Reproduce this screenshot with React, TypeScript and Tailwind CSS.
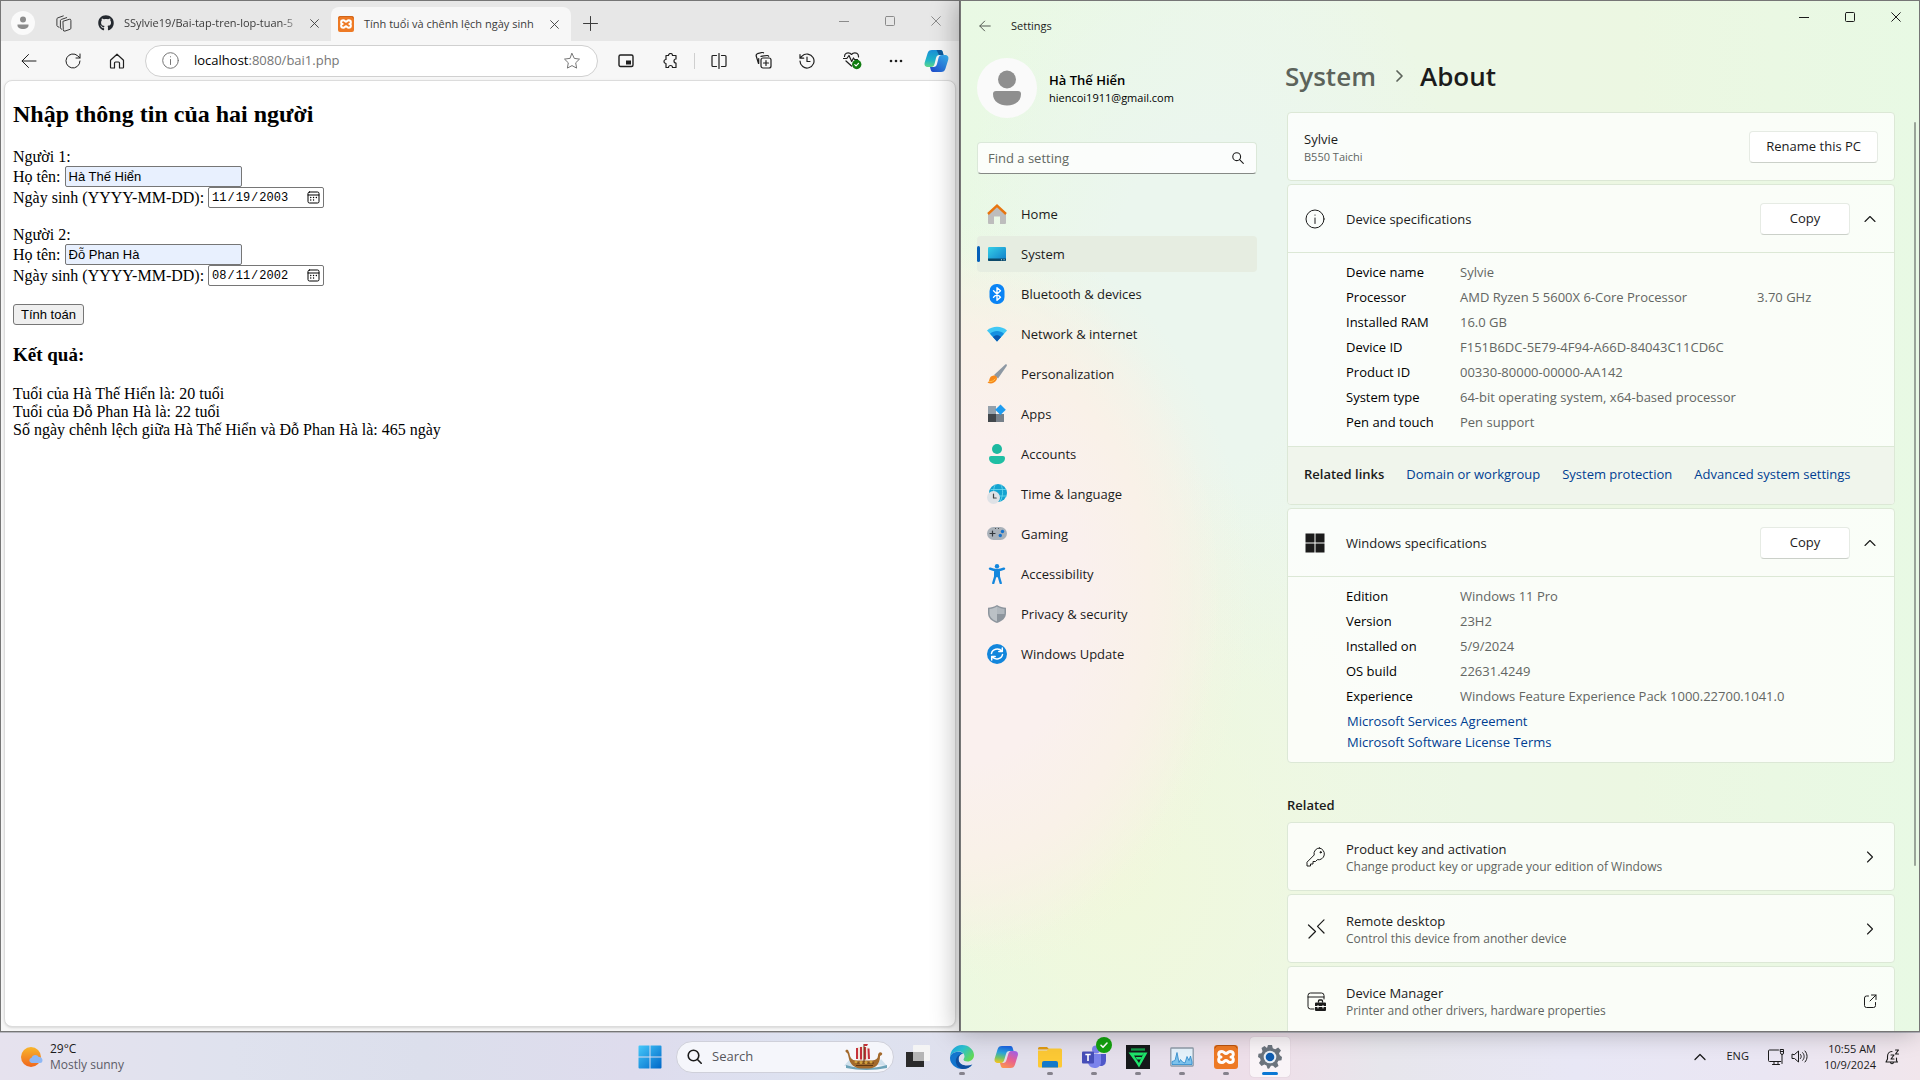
import type { ReactNode } from "react";
import { FaGithub } from "react-icons/fa";

const UI = "font-['Open_Sans','Noto_Sans',sans-serif]";

type IconProps = { size?: number; box?: number; sw?: number; className?: string; children: ReactNode };

function Icon({ size = 20, box = 20, sw = 1, className = "", children }: IconProps) {
  return (
    <svg
      width={size}
      height={size}
      viewBox={`0 0 ${box} ${box}`}
      fill="none"
      stroke="currentColor"
      strokeWidth={sw}
      strokeLinecap="round"
      strokeLinejoin="round"
      className={`shrink-0 ${className}`}
      aria-hidden="true"
    >
      {children}
    </svg>
  );
}

const BackArrow = ({ size = 16 }: { size?: number }) => (
  <Icon size={size} box={16} sw={size < 16 ? 1.3 : 1}><path d="M15 8H1.2M7.500 1.500 1 8l6.500 6.500" /></Icon>
);
const CloseX = ({ size = 10 }: { size?: number }) => (
  <Icon size={size} box={10}><path d="m.7.700 8.600 8.600M9.300.7.7 9.300" /></Icon>
);
const XamppLogo = ({ size }: { size: number }) => (
  <Icon size={size} box={24}>
    <rect x="0" y="0" width="24" height="24" rx="3" fill="#ee7a25" stroke="none" />
    <path d="M1 3a3 3 0 0 1 3-2.500h16A3 3 0 0 1 23 3" stroke="#b8530f" />
    <path
      d="M8 6.500c-2.500 0-3.300 1.200-3.300 2.800S6 12 7 12c-1 0-2.300 1.100-2.300 2.700S5.500 17.500 8 17.500c2.200 0 2.300-2 4-2s1.800 2 4 2c2.500 0 3.300-1.200 3.300-2.800S18 12 17 12c1 0 2.300-1.100 2.300-2.700S18.500 6.500 16 6.500c-2.200 0-2.300 2-4 2s-1.800-2-4-2Z"
      stroke="#fff"
      strokeWidth="3"
    />
  </Icon>
);

function BrowserTabs() {
  return (
    <header className="flex h-10 items-end bg-[#e7e7e7] text-[#3b3b3b]">
      <div className="flex h-9 items-center">
        <button aria-label="Profile" className="ml-2.5 flex size-6 items-center justify-center rounded-full bg-[#fafafa] text-[#8c8c8c]">
          <Icon size={14} box={14}>
            <circle cx="7" cy="3.500" r="3" fill="currentColor" stroke="none" />
            <path d="M1.500 8.500h11v.8c0 2.500-2.500 3.700-5.500 3.700s-5.500-1.200-5.500-3.700Z" fill="currentColor" stroke="none" />
          </Icon>
        </button>
        <button aria-label="Workspaces" className="ml-5">
          <Icon size={17} box={17}>
            <path d="m8.300 6.200 6-1.900a1.200 1.200 0 0 1 1.600 1.100v7.800a1.200 1.200 0 0 1-.8 1.100l-5.200 1.800a1.200 1.200 0 0 1-1.600-1.100Z" />
            <path d="M6.800 14.200 6 13.800a1 1 0 0 1-.6-1V5.600a1.200 1.200 0 0 1 .8-1.100l5.500-1.900M4 12.200l-1.500-.7a1 1 0 0 1-.6-1V4a1.200 1.200 0 0 1 .8-1.100L8.300.9" />
          </Icon>
        </button>
      </div>
      <div className="ml-[26px] flex h-9 w-[233px] items-center">
        <FaGithub size={16} className="shrink-0 text-[#24292f]" />
        <span className="ml-2.5 w-[182px] text-[11px] whitespace-nowrap [mask-image:linear-gradient(to_right,black_86%,transparent)]">
          SSylvie19/Bai-tap-tren-lop-tuan-5
        </span>
        <button aria-label="Close tab" className="ml-1"><CloseX size={9} /></button>
      </div>
      <div className="flex h-[34px] w-60 items-center rounded-t-lg bg-[#f7f7f7] pr-3 pl-[7px]">
        <XamppLogo size={16} />
        <span className="ml-2.5 flex-1 text-[11px] whitespace-nowrap">Tính tuổi và chênh lệch ngày sinh</span>
        <button aria-label="Close tab"><CloseX size={9} /></button>
      </div>
      <button aria-label="New tab" className="mb-2.5 ml-3">
        <Icon size={15} box={15}><path d="M7.500.5v14M.5 7.500h14" /></Icon>
      </button>
      <div className="ml-auto flex h-full items-center gap-9 pr-[18px] text-[#8b8b8b]">
        <button aria-label="Minimize"><Icon size={10} box={10}><path d="M0 5.500h10" /></Icon></button>
        <button aria-label="Maximize"><Icon size={10} box={10}><rect x=".5" y=".5" width="9" height="9" rx="1" /></Icon></button>
        <button aria-label="Close"><CloseX /></button>
      </div>
    </header>
  );
}

function BrowserToolbar() {
  return (
    <div className="flex h-[39px] items-center bg-[#f7f7f7] pr-2.5 pl-5 text-[#1f1f1f]">
      <div className="flex items-center gap-7">
        <button aria-label="Back"><BackArrow /></button>
        <button aria-label="Refresh">
          <Icon size={16} box={16}><path d="M15 8a7 7 0 1 1-2.300-5.200L15 5M15 1v4h-4" /></Icon>
        </button>
        <button aria-label="Home">
          <Icon size={16} box={16} sw={1.2}><path d="M1.500 7.200 8 1.200l6.500 6v7.100a.7.700 0 0 1-.7.700H10.500V10a1 1 0 0 0-1-1h-3a1 1 0 0 0-1 1v5H2.200a.7.700 0 0 1-.7-.7Z" /></Icon>
        </button>
      </div>
      <div className="ml-5 flex h-8 min-w-0 flex-1 items-center rounded-full border border-[#d0d0d0] bg-white pr-4 pl-4 text-[#767676]">
        <Icon size={17} box={17}><circle cx="8.500" cy="8.500" r="7.800" /><path d="M8.500 7.500v5M8.500 4.700v.2" /></Icon>
        <div className="relative ml-[15px] flex-1 text-[13px]">
          <input
            aria-label="Address"
            defaultValue="localhost:8080/bai1.php"
            className="w-full bg-transparent text-transparent caret-black outline-none"
          />
          <span aria-hidden="true" className="pointer-events-none absolute inset-0 whitespace-nowrap">
            <span className="text-black">localhost</span>:8080/bai1.php
          </span>
        </div>
        <button aria-label="Add to favorites">
          <Icon size={18} box={18}><path d="m9 1.500 2.300 4.900 5.200.7-3.800 3.700.9 5.300L9 13.600l-4.600 2.500.9-5.300-3.800-3.700 5.200-.7Z" /></Icon>
        </button>
      </div>
      <div className="ml-5 flex items-center">
        <button aria-label="Picture in picture">
          <Icon size={16} box={16} sw={1.4}><rect x="1" y="2" width="14" height="11.500" rx="1.500" /><rect x="8" y="7.500" width="5" height="4" fill="currentColor" stroke="none" /></Icon>
        </button>
        <button aria-label="Extensions" className="ml-7">
          <Icon size={16} box={16} sw={1.2}><path d="M4 2.500h2.500a2 2 0 0 1 4 0H14V6a2 2 0 0 0 0 4v4.500h-3.500a2 2 0 0 0-4 0H4v-4a2 2 0 1 1 0-4Z" /></Icon>
        </button>
        <span className="ml-4 h-4 w-px bg-[#cfcfcf]" />
        <button aria-label="Split screen" className="ml-4">
          <Icon size={16} box={16} sw={1.2}><path d="M8 .5v15M5.500 2.500H2a1 1 0 0 0-1 1v9a1 1 0 0 0 1 1h3.500M10.500 2.500H14a1 1 0 0 1 1 1v9a1 1 0 0 1-1 1h-3.500" /></Icon>
        </button>
        <button aria-label="Collections" className="ml-7">
          <Icon size={17} box={17} sw={1.2}><rect x="6" y="6" width="10" height="10" rx="2" /><path d="M11 8.500v5M8.500 11h5M3.500 11.500 1.200 4a2 2 0 0 1 1.300-2.300l4.500-1.200a2 2 0 0 1 1.500.3M6 4.300 12.200 3.500a1.500 1.500 0 0 1 1.500.8M3.700 11.500v-5" /></Icon>
        </button>
        <button aria-label="History" className="ml-[27px]">
          <Icon size={16} box={16} sw={1.2}><path d="M1 8a7 7 0 1 0 2-4.900L1 5.200M1 1.500v3.700h3.700M8 4v4.500h3" /></Icon>
        </button>
        <button aria-label="Browser essentials" className="ml-7">
          <Icon size={19} box={19} sw={1.2}>
            <path d="M1.500 5.500C1.500 2.500 4.500 1 7 2.300L8.500 3.500 10 2.300C12.500 1 15.800 2.500 15.500 6M.5 7.500h3.300L6 4.500l2.700 6L10.500 7l1 1.500h3M3 10l5.500 5" />
            <circle cx="13.700" cy="13.500" r="4.700" fill="#107c10" stroke="none" />
            <path d="m11.800 13.600 1.300 1.300 2.400-2.600" stroke="#fff" />
          </Icon>
        </button>
        <button aria-label="Settings and more" className="ml-[26px]">
          <Icon size={16} box={16}><g fill="currentColor" stroke="none"><circle cx="3" cy="8" r="1.300" /><circle cx="8" cy="8" r="1.300" /><circle cx="13" cy="8" r="1.300" /></g></Icon>
        </button>
        <button aria-label="Copilot" className="ml-5">
          <svg width="25" height="24" viewBox="0 0 25 24" aria-hidden="true">
            <defs>
              <linearGradient id="cpa" x1="0" y1="0" x2="0" y2="1"><stop stopColor="#1a8fd8" /><stop offset=".6" stopColor="#1fb5c8" /><stop offset="1" stopColor="#5fd68a" /></linearGradient>
              <linearGradient id="cpb" x1="0" y1="1" x2="1" y2="0"><stop stopColor="#1c45c8" /><stop offset="1" stopColor="#39b8f5" /></linearGradient>
            </defs>
            <path d="M12 1h4.500c1.500 0 2 1 2.500 3l.5 2h-4c-2 0-3 1-3.500 3l-1.500 6c-.5 2-1.500 3-3.500 3H4c-2.500 0-4-1.500-3.300-4.500L3.500 4.500C4.200 2 5.500 1 8 1Z" fill="url(#cpa)" />
            <path d="M12.500 1H16.500c1.500 0 2 1 2.500 3l.5 2H15Z" fill="#0e5a9c" />
            <path d="M13 23H9c-1.500 0-2-1-2.500-3L6 18h3.500c2 0 3-1 3.500-3l1.500-6c.5-2 1.500-3 3.500-3h3c2.500 0 4 1.500 3.300 4.500l-2.800 9C20.800 22 19.500 23 17 23Z" fill="url(#cpb)" />
          </svg>
        </button>
      </div>
    </div>
  );
}

const people = [
  { n: 1, name: "Hà Thế Hiển", born: "2003-11-19" },
  { n: 2, name: "Đỗ Phan Hà", born: "2002-08-11" },
];

function FormPage() {
  return (
    <main className="mx-[3px] mb-1 flex-1 overflow-hidden rounded-lg border border-[#dcdcdc] bg-white px-2 pt-5 font-['Liberation_Serif','Times_New_Roman',serif] text-base leading-[18px] text-black shadow-sm">
      <h2 className="text-2xl leading-[27px] font-bold">Nhập thông tin của hai người</h2>
      <form className="mt-5" onSubmit={(e) => e.preventDefault()}>
        {people.map((p) => (
          <fieldset key={p.n} className="mb-[18px]">
            <legend>Người {p.n}:</legend>
            <div className="flex h-[21px] items-center gap-1">
              <label htmlFor={`name${p.n}`}>Họ tên:</label>
              <input
                id={`name${p.n}`}
                defaultValue={p.name}
                className="h-[21px] w-[177px] rounded-xs border border-[#767676] bg-[#e8f0fe] px-[3px] font-['Liberation_Sans',Arial,sans-serif] text-[13px]"
              />
            </div>
            <div className="flex h-[21px] items-center gap-1">
              <label htmlFor={`born${p.n}`}>Ngày sinh (YYYY-MM-DD):</label>
              <span className="relative flex">
                <input
                  id={`born${p.n}`}
                  type="date"
                  defaultValue={p.born}
                  className="h-[21px] w-[116px] rounded-xs border border-[#767676] bg-white pl-0.5 font-['Liberation_Mono','Courier_New',monospace] text-xs [&::-webkit-calendar-picker-indicator]:opacity-0"
                />
                <span className="pointer-events-none absolute top-1 right-1">
                  <Icon size={13} box={13}>
                    <rect x="1" y="1" width="11" height="11" rx="1.500" />
                    <path d="M1 4h11" />
                    <path d="M6.500 6.500h.1M9.300 6.500h.1M3.700 9h.1M6.500 9h.1M3.700 6.500h.1" strokeWidth="1.300" />
                  </Icon>
                </span>
              </span>
            </div>
          </fieldset>
        ))}
        <button className="block h-[21px] rounded-[3px] border border-[#767676] bg-[#efefef] px-[7px] font-['Liberation_Sans',Arial,sans-serif] text-[13px] leading-4">
          Tính toán
        </button>
      </form>
      <h3 className="my-[19px] text-[19px] leading-[22px] font-bold">Kết quả:</h3>
      <p>
        Tuổi của Hà Thế Hiển là: 20 tuổi<br />
        Tuổi của Đỗ Phan Hà là: 22 tuổi<br />
        Số ngày chênh lệch giữa Hà Thế Hiển và Đỗ Phan Hà là: 465 ngày
      </p>
    </main>
  );
}

const navItems: { label: string; icon: ReactNode }[] = [
  {
    label: "Home",
    icon: (
      <>
        <path d="M1 9 10 1.500 19 9v10a1 1 0 0 1-1 1h-5v-7.500H7V20H2a1 1 0 0 1-1-1Z" fill="#bdbdbd" stroke="none" />
        <path d="M1 10 10 1.700 19 10" stroke="#e8750f" strokeWidth="2.400" strokeLinecap="butt" strokeLinejoin="miter" />
      </>
    ),
  },
  {
    label: "System",
    icon: (
      <>
        <rect x="1" y="3" width="18" height="14" rx="1.200" fill="url(#sys)" stroke="none" />
        <path d="M1 14.500h18V16a1 1 0 0 1-1 1H2a1 1 0 0 1-1-1Z" fill="#0c4a6a" stroke="none" />
        <path d="M14.500 15.800h.1M17 15.800h.1" stroke="#d8f2fa" />
      </>
    ),
  },
  {
    label: "Bluetooth & devices",
    icon: (
      <>
        <rect x="2.500" y="0" width="15" height="20" rx="7" fill="#0a84f5" stroke="none" />
        <path d="m6.500 6.700 7 6.500L10 16.300V3.700l3.500 3.100-7 6.500" stroke="#fff" strokeWidth="1.400" />
      </>
    ),
  },
  {
    label: "Network & internet",
    icon: (
      <>
        <path d="M0 6.500C5.500 1.500 14.500 1.500 20 6.500L10 17.500Z" fill="#41c8f5" stroke="none" />
        <path d="M3 9.800c4-3.800 10-3.800 14 0l-7 7.700Z" fill="#158fe0" stroke="none" />
        <path d="M6 13c2.400-2.200 5.600-2.200 8 0l-4 4.500Z" fill="#0a58b0" stroke="none" />
      </>
    ),
  },
  {
    label: "Personalization",
    icon: (
      <>
        <path d="M18.300.4c1.200-.5 2 .5 1.400 1.600L11 14.500 7 11Z" fill="#8d98a3" stroke="none" />
        <path d="M6.500 11.500c2.500-.5 4.500 2 3 4.500C7.500 19.500 4 20 .5 18.800c1.500-.8 1.500-2 2-3.800.5-2 2-3.200 4-3.500Z" fill="#f7891c" stroke="none" />
        <path d="M2.500 17.500c2 .3 4-.5 5.500-2.500" stroke="#ffc24a" />
      </>
    ),
  },
  {
    label: "Apps",
    icon: (
      <>
        <rect x="1" y="2" width="8" height="8" fill="#94a0ab" stroke="none" />
        <rect x="1" y="10" width="8" height="8" fill="#42474c" stroke="none" />
        <rect x="9" y="10" width="8" height="8" fill="#76808a" stroke="none" />
        <path d="m13.500.5 5.300 5.300-5.300 5.300-5.300-5.300Z" fill="#1e9cf0" stroke="none" />
      </>
    ),
  },
  {
    label: "Accounts",
    icon: (
      <>
        <circle cx="10" cy="5" r="5" fill="#1cb9a0" stroke="none" />
        <path d="M4 12h12a2 2 0 0 1 2 2c0 4-3.500 6-8 6s-8-2-8-6a2 2 0 0 1 2-2Z" fill="#1fbfa4" stroke="none" />
      </>
    ),
  },
  {
    label: "Time & language",
    icon: (
      <>
        <circle cx="11" cy="9" r="9" fill="#15a3d0" stroke="none" />
        <path d="M4 5.500h14.500M10 12h9.500M8 1c-1.500 3-1.500 6-1 9M14 .8c2.500 5 2 11-.5 16" stroke="#6fdcf0" strokeWidth=".8" />
        <circle cx="6.500" cy="13.500" r="6.500" fill="#dfe2e6" stroke="none" />
        <path d="M6.500 10v4h2.700" stroke="#444" strokeWidth="1.200" />
      </>
    ),
  },
  {
    label: "Gaming",
    icon: (
      <>
        <rect x="0" y="3" width="20" height="13" rx="6.500" fill="#a9b1b9" stroke="none" />
        <path d="M5.500 7v5M3 9.500h5" stroke="#33383d" strokeWidth="1.200" />
        <circle cx="15.500" cy="7.500" r="1.700" fill="#1672cc" stroke="none" />
        <circle cx="13.300" cy="11.500" r="1.700" fill="#1672cc" stroke="none" />
        <path d="M8.500 4.500h.1M11.500 4.500h.1" stroke="#444" />
      </>
    ),
  },
  {
    label: "Accessibility",
    icon: (
      <>
        <circle cx="10" cy="2.200" r="2.200" fill="#1386dd" stroke="none" />
        <path d="M3 4.700c4.500 2 9.500 2 14 0M8.200 7v5.500L6.300 19M11.800 7v5.500l1.900 6.500M10 6v6" stroke="#1386dd" strokeWidth="2.400" />
      </>
    ),
  },
  {
    label: "Privacy & security",
    icon: (
      <>
        <path d="M10 1c3 2 6 2.700 9 2.700V9c0 5-3.500 8-9 10-5.500-2-9-5-9-10V3.700C4 3.700 7 3 10 1Z" fill="#8d959d" stroke="none" />
        <path d="M10 2.500c2.500 1.600 5 2.200 7.500 2.400V10H10Z" fill="#b0b7bd" stroke="none" />
        <path d="M10 2.500C7.500 4.100 5 4.700 2.500 4.900V9c0 4 2.700 6.600 7.500 8.500Z" fill="#bbc1c6" stroke="none" />
      </>
    ),
  },
  {
    label: "Windows Update",
    icon: (
      <>
        <circle cx="10" cy="10" r="10" fill="#1286dc" stroke="none" />
        <path d="M4.500 9.500c.7-4.500 7-6 10.500-2.300M15.300 4v3.500h-3.500M15.500 10.500c-.7 4.500-7 6-10.500 2.300M4.700 16v-3.500h3.500" stroke="#fff" strokeWidth="1.500" />
      </>
    ),
  },
];

function SettingsSidebar() {
  return (
    <aside className="w-[280px] shrink-0">
      <div className="mt-[9px] flex items-center gap-3">
        <span className="flex size-[60px] items-center justify-center rounded-full bg-[#fafafa] text-[#8f8f8f]">
          <Icon size={36} box={36}>
            <circle cx="18" cy="9.500" r="9" fill="currentColor" stroke="none" />
            <path d="M7 21h22a3 3 0 0 1 3 3c0 7.500-6.500 11.500-14 11.500S4 31.500 4 24a3 3 0 0 1 3-3Z" fill="currentColor" stroke="none" />
          </Icon>
        </span>
        <div className="pt-0.5 text-black">
          <div className="text-[13px] leading-[18px] font-semibold">Hà Thế Hiển</div>
          <div className="text-[11px] leading-[18px]">hiencoi1911@gmail.com</div>
        </div>
      </div>
      <div className="mt-6 flex h-8 items-center rounded border border-b-[#858985] border-[#dbe8d9] bg-white/80 pr-3">
        <input
          aria-label="Find a setting"
          placeholder="Find a setting"
          className="min-w-0 flex-1 bg-transparent pt-0.5 pl-2.5 text-[13px] outline-none placeholder:text-[#626862]"
        />
        <Icon size={12} box={12} sw={1.1}><circle cx="4.700" cy="4.700" r="3.900" /><path d="m7.600 7.600 3.700 3.700" /></Icon>
      </div>
      <svg width="0" height="0" className="absolute" aria-hidden="true">
        <defs>
          <linearGradient id="sys" x1="0" y1="0" x2="1" y2="1"><stop stopColor="#35d0e8" /><stop offset="1" stopColor="#0f7cc8" /></linearGradient>
        </defs>
      </svg>
      <nav className="mt-[22px] flex flex-col gap-1">
        {navItems.map((item) => {
          const active = item.label === "System";
          return (
            <a
              key={item.label}
              href="#"
              className={`relative flex h-9 items-center gap-3.5 rounded pl-2.5 text-[13px] ${active ? "bg-[#e6ede1]" : ""}`}
            >
              {active && <span className="absolute left-0 h-4 w-[3px] rounded-full bg-[#0560b8]" />}
              <Icon>{item.icon}</Icon>
              <span className="pt-0.5">{item.label}</span>
            </a>
          );
        })}
      </nav>
    </aside>
  );
}

const CARD = "rounded border border-[#dce8d6] bg-white/75";
const BTN = "h-8 rounded border border-[#e6ebe4] border-b-[#cbd0c9] bg-white text-[13px]";
const LINK = "text-[13px] text-[#003e92]";

function SpecHeader({ icon, title }: { icon: ReactNode; title: string }) {
  return (
    <div className="flex h-[68px] items-center border-b border-[#dce8d6] pr-[18px] pl-[17px]">
      {icon}
      <h3 className="ml-[21px] flex-1 pt-0.5 text-[13px]">{title}</h3>
      <button className={`${BTN} w-[90px]`}>Copy</button>
      <button aria-label={`Collapse ${title}`} className="ml-3.5">
        <Icon size={12} box={12} sw={1.1}><path d="m1 8.500 5-5 5 5" /></Icon>
      </button>
    </div>
  );
}

function SpecTable({ rows }: { rows: string[][] }) {
  return (
    <table className="ml-[58px] text-left text-[13px] leading-[25px]">
      <tbody>
        {rows.map(([k, v, extra]) => (
          <tr key={k}>
            <th scope="row" className="w-[114px] p-0 font-normal text-black">{k}</th>
            <td className="p-0 whitespace-nowrap text-[#636663]">
              {v}
              {extra && <span className="ml-[70px]">{extra}</span>}
            </td>
          </tr>
        ))}
      </tbody>
    </table>
  );
}

const deviceRows = [
  ["Device name", "Sylvie"],
  ["Processor", "AMD Ryzen 5 5600X 6-Core Processor", "3.70 GHz"],
  ["Installed RAM", "16.0 GB"],
  ["Device ID", "F151B6DC-5E79-4F94-A66D-84043C11CD6C"],
  ["Product ID", "00330-80000-00000-AA142"],
  ["System type", "64-bit operating system, x64-based processor"],
  ["Pen and touch", "Pen support"],
];

const windowsRows = [
  ["Edition", "Windows 11 Pro"],
  ["Version", "23H2"],
  ["Installed on", "5/9/2024"],
  ["OS build", "22631.4249"],
  ["Experience", "Windows Feature Experience Pack 1000.22700.1041.0"],
];

const chevronRight = <Icon size={12} box={12} sw={1.1}><path d="m3.500 1 5 5-5 5" /></Icon>;

const related = [
  {
    title: "Product key and activation",
    text: "Change product key or upgrade your edition of Windows",
    icon: <><path d="M13.500 1a5.500 5.500 0 0 0-5.300 7L1 15.200V19h3.500v-2H7v-2.500h2.500l1.800-1.800A5.500 5.500 0 1 0 13.500 1Z" /><circle cx="14.700" cy="5.300" r=".7" fill="currentColor" /></>,
    end: chevronRight,
  },
  {
    title: "Remote desktop",
    text: "Control this device from another device",
    icon: <path d="m2.500 6 7 6.500L3 19M18 .8l-6.500 6.500L18 14" strokeWidth="1.200" />,
    end: chevronRight,
  },
  {
    title: "Device Manager",
    text: "Printer and other drivers, hardware properties",
    icon: (
      <>
        <path d="M8 18H4.500A2.500 2.500 0 0 1 2 15.500v-11A2.500 2.500 0 0 1 4.500 2h11A2.500 2.500 0 0 1 18 4.500V8M2 6h16" />
        <path d="M9 12.500a1 1 0 0 1 1-1h9a1 1 0 0 1 1 1V15H9ZM9 16h11v3a1 1 0 0 1-1 1h-9a1 1 0 0 1-1-1Z" fill="currentColor" stroke="none" />
        <path d="M12.500 11v-1a1 1 0 0 1 1-1h2a1 1 0 0 1 1 1v1" strokeWidth="1.300" />
        <path d="M12 14.500v2.500M17 14.500v2.500" stroke="#fff" />
      </>
    ),
    end: <Icon size={14} box={14}><path d="M5.500 2H3.500a2 2 0 0 0-2 2v7.500a2 2 0 0 0 2 2h7a2 2 0 0 0 2-2V8.500M8.500 1H13v4.500M13 1 7 7" /></Icon>,
  },
];

function SettingsWindow() {
  return (
    <section
      className={`relative z-10 flex min-w-0 flex-1 flex-col overflow-hidden border border-[#767676] bg-[#ebf7e4] text-[#1b1b1b] shadow-[-4px_0_24px_rgba(0,0,0,0.28)] bg-[radial-gradient(ellipse_200px_270px_at_0px_600px,#faf0ee_60%,#f9f1e8_95%,transparent_130%),radial-gradient(ellipse_290px_380px_at_0px_600px,#f9f1e2_40%,transparent_100%),radial-gradient(ellipse_360px_420px_at_160px_880px,#f0f8dc_0%,transparent_100%),radial-gradient(ellipse_260px_400px_at_250px_300px,#ebf6ee_40%,transparent_100%),linear-gradient(to_right,#e9f9e4,#ecf7e8_35%,#ecf7e2_70%,#e8f9e4)]`}
    >
      <header className="flex h-12 shrink-0 items-center pt-0.5 pl-[18px]">
        <button aria-label="Back" className="text-[#4f554e]"><BackArrow size={12} /></button>
        <span className="ml-5 text-[11px]">Settings</span>
        <div className="mb-[18px] ml-auto flex items-center gap-9 pr-[18px]">
          <button aria-label="Minimize"><Icon size={10} box={10}><path d="M0 5.500h10" /></Icon></button>
          <button aria-label="Maximize"><Icon size={10} box={10}><rect x=".5" y=".5" width="9" height="9" rx="1" /></Icon></button>
          <button aria-label="Close"><CloseX /></button>
        </div>
      </header>
      <div className="flex min-h-0 flex-1 pl-4">
        <SettingsSidebar />
        <div className="flex min-w-0 flex-1 flex-col overflow-hidden pr-6 pl-[30px]">
          <h1 className="mt-2 flex h-[38px] items-center text-[26px] font-semibold">
            <a href="#" className="-ml-0.5 text-[#5c635b]">System</a>
            <Icon size={14} box={14} sw={1.7} className="mr-3.5 ml-4 text-[#5c635b]"><path d="m5 2 5 5-5 5" /></Icon>
            About
          </h1>
          <div className="mt-[17px] flex flex-col gap-[3px]">
            <div className={`${CARD} flex h-[69px] shrink-0 items-center pr-4 pl-4`}>
              <div className="flex-1 pt-0.5">
                <div className="text-[13px] leading-[18px]">Sylvie</div>
                <div className="text-[11px] leading-[17px] text-[#5f645f]">B550 Taichi</div>
              </div>
              <button className={`${BTN} px-4`}>Rename this PC</button>
            </div>
            <section className={`${CARD} shrink-0 overflow-hidden`}>
              <SpecHeader
                title="Device specifications"
                icon={<Icon><circle cx="10" cy="10" r="9" /><path d="M10 9v5.500M10 6v.2" /></Icon>}
              />
              <div className="pt-[7px] pb-[11px]"><SpecTable rows={deviceRows} /></div>
              <div className="flex h-[58px] items-center gap-[22px] border-t border-[#dce8d6] bg-[#f0f5ec] px-4 pb-0.5">
                <h4 className="text-[13px] font-semibold">Related links</h4>
                <a href="#" className={LINK}>Domain or workgroup</a>
                <a href="#" className={LINK}>System protection</a>
                <a href="#" className={LINK}>Advanced system settings</a>
              </div>
            </section>
            <section className={`${CARD} shrink-0`}>
              <SpecHeader
                title="Windows specifications"
                icon={<Icon><path d="M.5.500h9v9h-9ZM10.500.500h9v9h-9ZM.5 10.500h9v9h-9ZM10.500 10.500h9v9h-9Z" fill="currentColor" stroke="none" /></Icon>}
              />
              <div className="pt-[7px] pb-[9px]">
                <SpecTable rows={windowsRows} />
                <div className="mt-0.5 ml-[59px] flex flex-col items-start leading-[21px]">
                  <a href="#" className={LINK}>Microsoft Services Agreement</a>
                  <a href="#" className={LINK}>Microsoft Software License Terms</a>
                </div>
              </div>
            </section>
          </div>
          <h2 className="mt-[33px] mb-2 text-[13px] leading-[18px] font-semibold">Related</h2>
          <div className="flex flex-col gap-[3px]">
            {related.map((r) => (
              <a key={r.title} href="#" className={`${CARD} flex h-[69px] shrink-0 items-center pr-[17px] pl-[18px]`}>
                <Icon>{r.icon}</Icon>
                <div className="ml-5 flex-1 pt-0.5">
                  <div className="text-[13px] leading-[18px]">{r.title}</div>
                  <div className="text-xs leading-[17px] text-[#5f645f]">{r.text}</div>
                </div>
                <span className="flex w-3.5 justify-center">{r.end}</span>
              </a>
            ))}
          </div>
        </div>
      </div>
      <span className="absolute top-[121px] right-[3px] bottom-[165px] w-0.5 rounded-full bg-[#9aa599]" />
    </section>
  );
}

const taskApps: { name: string; dot: "none" | "dot" | "active"; icon: ReactNode }[] = [
  {
    name: "Task view",
    dot: "none",
    icon: (
      <>
        <rect x="0" y="7" width="18" height="15" fill="#2a2a2a" />
        <rect x="7" y="0" width="17" height="16" rx="1" fill="#f4f4f4" />
        <rect x="7" y="7" width="11" height="9" fill="#b5b5b5" />
      </>
    ),
  },
  {
    name: "Edge",
    dot: "dot",
    icon: (
      <>
        <path d="M12 0c7 0 12 5 12 10 0 4-3 6.500-6.500 6.500-2.500 0-4-1-4-2 0-.8 1-1.300 1-3C14.500 8.500 12 6.500 8.500 6.500 4 6.500 0 9.500 0 13 0 5.500 5 0 12 0Z" fill="url(#edgeTop)" />
        <path d="M0 13C0 9.500 4 6.800 8.500 6.800c1.800 0 3.500.6 4.600 1.700C10 9 8.500 11.500 8.500 14c0 4.500 4.500 7 8.500 7 2 0 3.800-.6 5.300-1.600C20 22.500 16.500 24 12.500 24 5.500 24 0 19 0 13Z" fill="#1376ce" />
        <path d="M8.500 14c0 4.500 4 6.500 8.500 6.500 2 0 3.800-.4 5.300-1.100C20 22.500 16.500 24 12.500 24 8 23 5.800 19.500 5.800 16c0-4 3.500-7.300 7.300-7.500C10 9 8.500 11.500 8.500 14Z" fill="#0f4f9f" />
      </>
    ),
  },
  {
    name: "Copilot",
    dot: "none",
    icon: (
      <>
        <path d="M11 1h5.500c1.500 0 2 1 2.500 3l.6 2h-4.100c-2 0-3 1-3.500 3l-1.500 5c-.5 2-1.500 4-3.500 4H4c-2.500 0-4-1.500-3.300-4.500L3.500 4.500C4.200 2 5.500 1 8 1Z" fill="url(#copL)" />
        <path d="M13 23H9c-1.500 0-2-1-2.500-3L6 18h3c2 0 3-1 3.500-3L14 10c.5-2 1.500-4 3.500-4h3c2.500 0 4 1.500 3.300 4.500l-2.800 9C20.300 22 19 23 16.500 23Z" fill="url(#copR)" />
      </>
    ),
  },
  {
    name: "File Explorer",
    dot: "dot",
    icon: (
      <>
        <path d="M0 3.500A1.500 1.500 0 0 1 1.500 2H9l2.500 2.500H0Z" fill="#e09a10" />
        <path d="M0 5.500 9 5.500 11 3.500h11.500A1.500 1.500 0 0 1 24 5v16a1.500 1.500 0 0 1-1.500 1.500h-21A1.500 1.500 0 0 1 0 21Z" fill="#fcc935" />
        <path d="M4 22.500V18a2 2 0 0 1 2-2h12a2 2 0 0 1 2 2v4.500Z" fill="#1379c9" />
      </>
    ),
  },
  {
    name: "Teams",
    dot: "dot",
    icon: (
      <>
        <circle cx="14" cy="4.500" r="4" fill="#7b83eb" />
        <path d="M14 9h10v7a5 5 0 0 1-8 4Z" fill="#5059c9" />
        <path d="M6 9h13v8c0 4-3 6-6.500 6S6 20 6 17Z" fill="#7b83eb" />
        <rect x="0" y="6.500" width="12" height="12" rx="1" fill="#464eb8" />
        <path d="M3.300 9.500h5.400M6 9.500v6.500" stroke="#fff" strokeWidth="1.600" />
      </>
    ),
  },
  {
    name: "Game launcher",
    dot: "dot",
    icon: (
      <>
        <rect x="0" y="0" width="24" height="24" fill="#15181a" />
        <path d="M2.500 7.500h15.500l-1.800 3H8L13 18l5-10.500h3.500L13 22.500 9.500 17 2.500 7.500Z" fill="#1fe36a" />
        <path d="M9.500 12h6.500l-1.500 2.500h-3.500Z" fill="#1fe36a" />
        <path d="M5 4.500h14" stroke="#149a48" strokeWidth="2.400" />
      </>
    ),
  },
  {
    name: "Task Manager",
    dot: "dot",
    icon: (
      <>
        <rect x=".8" y="3" width="22.400" height="18" rx=".8" fill="#e5f2fb" stroke="#8d9aa8" strokeWidth="1.300" />
        <path d="M2 19.500v-3l3-1 2-8 2 10 1.500-3 2 2.500 2.500 1 2-6.500 2 4 1.500-4.500 1.500 6v2.500Z" fill="#7cc2ec" stroke="#2a86c9" strokeWidth=".8" />
      </>
    ),
  },
  { name: "XAMPP", dot: "dot", icon: null },
  {
    name: "Settings",
    dot: "active",
    icon: (
      <>
        <path d="M10 0h4l.8 3.300 2.400 1 3-1.700 2.800 3-2 2.700 .8 2L24 12l-.5 3.200-3.200.5-1 2 1.200 3.300-3.200 2-2.300-2.300h-2L11 23.800l-1.500-.2-1-3-2.200-1L3.500 21 1 18l1.700-2.800-.7-2L0 12l.5-3.200 3-.6 1-2L3.500 3l3-2 2.500 2Z" fill="#6b747d" />
        <circle cx="12" cy="12" r="6.300" fill="#e9eff5" />
        <circle cx="12" cy="12" r="4.300" fill="#0f5cae" />
      </>
    ),
  },
];

function Taskbar() {
  return (
    <footer className="flex h-12 shrink-0 items-center border-t border-[#b7b7bf] bg-[linear-gradient(to_right,#e6e2ee,#dfe2ee_12%,#dcdfec_22%,#dedced_33%,#dde3f1_43%,#e0dfec_52%,#e6dfeb_60%,#efdfe9_66%,#e7e6ec_72%,#e8e7f5_82%,#eae6f3_92%,#f1e6ec)] text-[#1b1b1b]">
      <div className="flex flex-1 items-center pl-5">
        <svg width="24" height="22" viewBox="0 0 24 22" aria-hidden="true">
          <defs><linearGradient id="sun" x1="0" y1="0" x2="0" y2="1"><stop stopColor="#f8b62c" /><stop offset="1" stopColor="#f0661c" /></linearGradient></defs>
          <circle cx="11" cy="11" r="10" fill="url(#sun)" />
          <path d="M11.500 17a2.700 2.700 0 0 1 0-5.300 4 4 0 0 1 7.300-.7A3 3 0 1 1 20 17Z" fill="#8fb8f5" />
        </svg>
        <div className="ml-1.5 text-xs leading-4">
          <div>29°C</div>
          <div className="text-[#5c5c66]">Mostly sunny</div>
        </div>
      </div>
      <div className="flex h-full items-center gap-1">
        <button aria-label="Start" className="flex size-10 items-center justify-center">
          <svg width="24" height="24" viewBox="0 0 24 24" aria-hidden="true">
            <defs><linearGradient id="win" x1="0" y1="0" x2="1" y2="1"><stop stopColor="#45c8fa" /><stop offset="1" stopColor="#0067c8" /></linearGradient></defs>
            <path d="M.5 1.500a1 1 0 0 1 1-1h10v11H.5ZM12.500.5h10a1 1 0 0 1 1 1v10h-11ZM.5 12.500h11v11h-10a1 1 0 0 1-1-1ZM12.500 12.500h11v10a1 1 0 0 1-1 1h-10Z" fill="url(#win)" />
          </svg>
        </button>
        <label className="ml-0.5 flex h-8 w-[218px] items-center rounded-full border border-[#cfd0da] bg-[#f5f6fb] pr-1.5 pl-2.5">
          <Icon size={15} box={15} sw={1.6}><circle cx="6.500" cy="6.500" r="5.300" /><path d="m10.500 10.500 3.700 3.700" /></Icon>
          <input aria-label="Search" placeholder="Search" className="ml-2.5 w-0 flex-1 bg-transparent text-[13px] outline-none placeholder:text-[#55565c]" />
          <svg width="43" height="28" viewBox="0 0 43 26" aria-hidden="true">
            <path d="M0 22 6 15l5 7ZM33 21l4-6 6 7Z" fill="#cfe0ec" />
            <path d="M2 21c12 4 28 4 41 0v3c-13 2.500-28 2.500-41 0Z" fill="#6da3b8" />
            <path d="M4 6c-3-1-3 2-1.500 2.500C4 9 4 11 5 15c1 5 6 9.500 12 9.500h8c7 0 11-5 11-12 0-1.500 3-1 2-3.500-2-2-4 0-4 2.500 0 3-2 4.500-6 5H12c-4 0-6-3-6.500-7Z" fill="#a3692c" />
            <path d="M11 19h19M12 21.500h17" stroke="#5d3814" strokeWidth="1" />
            <path d="M12 4c4-2 10-2 13 0-1 4-1 7 1 11-4 1.500-10 1.500-13 0 1-4 1-7-1-11Z" fill="#f1e5dc" />
            <path d="M13 4v11M17 3v12.500M21 3v12.500M24.500 4.500 25 15" stroke="#c4303a" strokeWidth="2" />
            <path d="M20 0v18" stroke="#5d3814" />
            <path d="M20 0h4l-1 2h-3Z" fill="#c4303a" />
            <g fill="#d2a13c"><circle cx="12" cy="18" r="1.500" /><circle cx="17" cy="18.500" r="1.500" /><circle cx="22" cy="18.500" r="1.500" /><circle cx="27" cy="18" r="1.500" /></g>
          </svg>
        </label>
        <svg width="0" height="0" className="absolute" aria-hidden="true">
          <defs>
            <linearGradient id="edgeTop" x1="0" y1="0" x2="1" y2=".6"><stop stopColor="#1b9de0" /><stop offset=".5" stopColor="#2cc3d0" /><stop offset="1" stopColor="#62d957" /></linearGradient>
            <linearGradient id="copL" x1=".5" y1="0" x2=".3" y2="1"><stop stopColor="#1b63e0" /><stop offset=".4" stopColor="#2aa3dd" /><stop offset=".7" stopColor="#6fc46a" /><stop offset="1" stopColor="#f2c321" /></linearGradient>
            <linearGradient id="copR" x1=".8" y1="0" x2=".3" y2="1"><stop stopColor="#a461e8" /><stop offset=".5" stopColor="#e8608f" /><stop offset="1" stopColor="#fb9353" /></linearGradient>
          </defs>
        </svg>
        {taskApps.map((app) => (
          <button
            key={app.name}
            aria-label={app.name}
            className={`relative flex size-10 items-center justify-center rounded ${app.dot === "active" ? "bg-white/65 shadow-[0_0_1px_rgba(0,0,0,0.25)]" : ""}`}
          >
            {app.icon ? <svg width="24" height="24" viewBox="0 0 24 24" fill="none" aria-hidden="true">{app.icon}</svg> : <XamppLogo size={24} />}
            {app.name === "Teams" && (
              <span className="absolute top-0 right-0.5 flex size-4 items-center justify-center rounded-full bg-[#13a10e] text-white">
                <Icon size={10} box={10} sw={1.6}><path d="m2 5.300 2 2 4-4.300" /></Icon>
              </span>
            )}
            {app.dot === "dot" && <span className="absolute bottom-0.5 h-[3px] w-1.5 rounded-full bg-[#85828c]" />}
            {app.dot === "active" && <span className="absolute bottom-0.5 h-[3px] w-4 rounded-full bg-[#0a78d4]" />}
          </button>
        ))}
      </div>
      <div className="flex flex-1 items-center justify-end pr-5 text-[11px]">
        <button aria-label="Show hidden icons"><Icon size={12} box={12} sw={1.3}><path d="m1 8.500 5-5 5 5" /></Icon></button>
        <span className="ml-5">ENG</span>
        <Icon size={18} box={18} className="ml-[18px]"><path d="M11.500 2H2.500a1 1 0 0 0-1 1v9.500a1 1 0 0 0 1 1h11.300M5.500 16.500h7M7 13.500v3M11 13.500v3M13.500 1.500h3V5a1.500 1.500 0 0 1-3 0ZM15 6.500v9M13.500 3.500h3" /></Icon>
        <Icon size={17} box={17} className="ml-1.5"><path d="M1 6.500v4h2.500L7.500 14V3L3.500 6.500ZM9.500 6.500c1 1.200 1 2.800 0 4M11.700 4.700c2 2.200 2 5.400 0 7.600M14 3c2.800 3 2.800 8 0 11" /></Icon>
        <div className="ml-4 text-right leading-4">
          <div>10:55 AM</div>
          <div>10/9/2024</div>
        </div>
        <Icon size={16} box={16} sw={1.1} className="ml-2"><path d="M8 2.500C5 2.500 3.500 5 3.500 7.500V10L2 13h11.500M12.500 9v2.500l.8 1.500M6.500 13.300c.2 2 2.800 2 3 0M11.500 1h3l-3 4h3M7 6h3l-3 4h3" /></Icon>
      </div>
    </footer>
  );
}

export default function App() {
  return (
    <div className={`${UI} flex h-screen flex-col overflow-hidden`}>
      <div className="flex min-h-0 flex-1">
        <section className="flex min-w-0 flex-1 flex-col border border-[#767676] bg-[#f7f7f7]">
          <BrowserTabs />
          <BrowserToolbar />
          <FormPage />
        </section>
        <SettingsWindow />
      </div>
      <Taskbar />
    </div>
  );
}
